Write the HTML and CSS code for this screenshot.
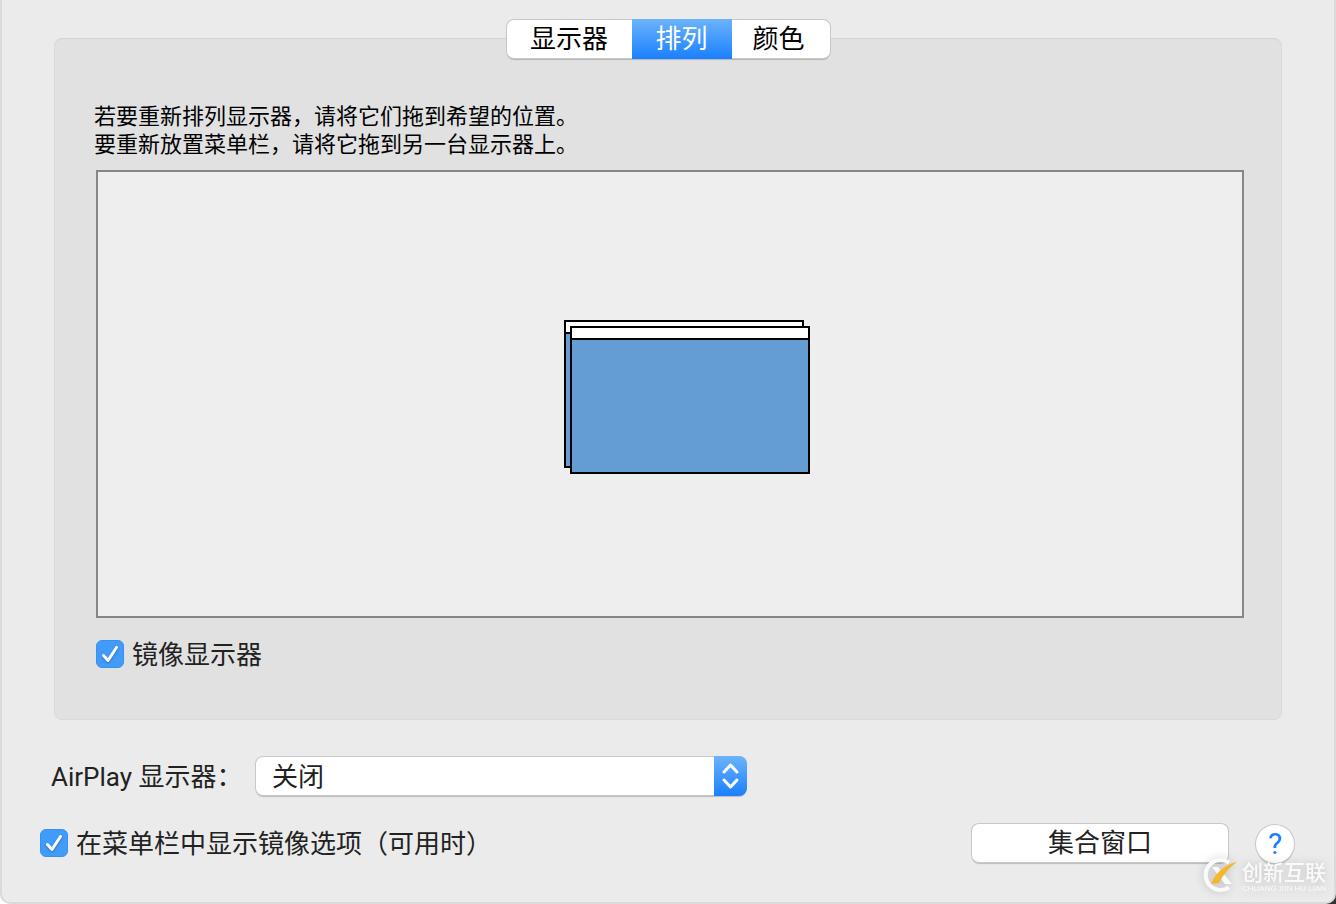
FILE: index.html
```html
<!DOCTYPE html>
<html lang="zh-CN">
<head>
    <meta charset="UTF-8">
    <meta name="viewport" content="width=device-width, initial-scale=1.0">
    <title>显示器</title>
    <link rel="stylesheet" href="styles.css">
</head>
<body>
    <main class="window">
        <section class="panel">
            <div class="tabs" role="tablist">
                <button type="button" class="tab tab-wide" role="tab">显示器</button>
                <button type="button" class="tab active" role="tab" aria-selected="true">排列</button>
                <button type="button" class="tab tab-last" role="tab">颜色</button>
            </div>

            <p class="hint">若要重新排列显示器，请将它们拖到希望的位置。<br>要重新放置菜单栏，请将它拖到另一台显示器上。</p>

            <div class="canvas">
                <div class="display display-back"><div class="menubar"></div></div>
                <div class="display display-front"><div class="menubar"></div></div>
            </div>

            <label class="check panel-check">
                <span class="box">
                    <input type="checkbox" checked>
                    <svg class="tick" viewBox="0 0 28 28"><path d="M7.5 15.5L12 20.5L20.5 7.5"/></svg>
                </span>
                镜像显示器
            </label>
        </section>

        <div class="airplay">
            <label for="airplay">AirPlay 显示器：</label>
            <div class="select">
                <select id="airplay">
                    <option>关闭</option>
                </select>
                <span class="arrows">
                    <svg viewBox="0 0 33 40"><path d="M10 16L16.5 9L23 16M10 24L16.5 31L23 24"/></svg>
                </span>
            </div>
        </div>

        <footer class="footer">
            <label class="check">
                <span class="box">
                    <input type="checkbox" checked>
                    <svg class="tick" viewBox="0 0 28 28"><path d="M7.5 15.5L12 20.5L20.5 7.5"/></svg>
                </span>
                在菜单栏中显示镜像选项（可用时）
            </label>
            <button type="button" class="gather">集合窗口</button>
            <button type="button" class="help">?</button>
        </footer>
    </main>

    <div class="watermark">
        <svg class="logo" viewBox="0 0 38 38">
            <path class="ring" d="M28 6.500A15 15 0 1 0 28 31.500"/>
            <path class="cross" d="M11 11H17L31 28H24Z"/>
            <path class="swoosh" d="M10 28C15 17 22 9 36 6C29 11 23 17 18 27Z"/>
        </svg>
        <div class="brand">
            <span class="brand-name">创新互联</span>
            <span class="brand-sub">CHUANG XIN HU LIAN</span>
        </div>
    </div>
</body>
</html>
```

FILE: styles.css
```css
* {
    box-sizing: border-box;
}
body {
    margin: 0;
    background: linear-gradient(to right, #fff 50%, #333 50%);
    font-family: Roboto, "Noto Sans CJK SC", sans-serif;
    font-size: 26px;
    line-height: 40px;
    color: #222;
}
button, select {
    font: inherit;
    color: inherit;
    margin: 0;
}
.window {
    display: flex;
    flex-direction: column;
    min-height: 100vh;
    padding: 38px;
    background: #ebebeb;
    border: solid #dadada;
    border-width: 0 2px 2px;
    border-radius: 0 0 10px 10px;
}

/* Panel */
.panel {
    flex: 1;
    display: flex;
    flex-direction: column;
    margin: 0 14px;
    padding: 0 37px 44px 39px;
    background: #e1e1e1;
    border: 1px solid #dadada;
    border-top-color: #d2d2d2;
    border-radius: 8px;
}
.tabs {
    display: flex;
    align-self: center;
    margin: -19px 2px 0 0;
    background: #fff;
    border-radius: 7px;
    box-shadow: 0 0 0 1px #c8c8c8, 0 2px 1px rgba(0,0,0,0.2);
}
.tab {
    width: 100px;
    height: 38px;
    padding: 0;
    line-height: 38px;
    background: none;
    border: none;
    color: #000;
}
.tab-wide {
    width: 125px;
}
.tab-last {
    width: 98px;
    padding-right: 4px;
}
.tab.active {
    height: 40px;
    margin: -1px 0;
    color: #fff;
    background: linear-gradient(#6cb3fa, #1a80ff);
}
.hint {
    margin: 45px 0 11px;
    font-size: 22px;
    line-height: 28px;
    color: #000;
}
.canvas {
    position: relative;
    flex: 1;
    min-height: 200px;
    margin-left: 2px;
    background: #eee;
    border: 2px solid #868686;
}
.display {
    position: absolute;
    width: 240px;
    height: 148px;
    background: #649dd4;
    border: 2px solid #000;
}
.display-back {
    left: calc(50% - 106px);
    top: calc(50% - 74px);
}
.display-front {
    left: calc(50% - 100px);
    top: calc(50% - 68px);
}
.menubar {
    height: 12px;
    background: #fff;
    border-bottom: 2px solid #000;
}

/* Checkboxes */
.check {
    display: flex;
    align-items: center;
    gap: 8px;
    padding-top: 2px;
}
.panel-check {
    margin: 15px 0 0 2px;
}
.box {
    position: relative;
    width: 28px;
    height: 28px;
    margin-bottom: 2px;
}
.box input {
    appearance: none;
    display: block;
    width: 28px;
    height: 28px;
    margin: 0;
    background: #419bfa;
    border: 1px solid #3990f0;
    border-radius: 6px;
}
.tick {
    position: absolute;
    inset: 0;
    fill: none;
    stroke: #fff;
    stroke-width: 3;
    stroke-linecap: round;
    stroke-linejoin: round;
    pointer-events: none;
    filter: drop-shadow(0 1px 1px rgba(0,0,0,0.3));
}

/* AirPlay row */
.airplay {
    display: flex;
    align-items: center;
    margin: 36px 0 26px 11px;
}
.airplay label {
    width: 204px;
    padding-top: 2px;
    line-height: 38px;
}
.select {
    position: relative;
    width: 492px;
    padding: 1px;
}
.select select {
    appearance: none;
    display: block;
    width: 100%;
    height: 38px;
    padding: 2px 40px 0 16px;
    line-height: 36px;
    background: #fff;
    border: none;
    border-radius: 7px;
    box-shadow: 0 0 0 1px #c8c8c8, 0 2px 1px rgba(0,0,0,0.2);
}
.arrows {
    position: absolute;
    top: 0;
    right: 0;
    width: 33px;
    height: 40px;
    background: linear-gradient(#6cb3fa, #1a80ff);
    border-radius: 0 8px 8px 0;
    pointer-events: none;
}
.arrows svg {
    display: block;
    fill: none;
    stroke: #fff;
    stroke-width: 3;
    stroke-linecap: round;
    stroke-linejoin: round;
}

/* Bottom row */
.footer {
    display: flex;
    align-items: center;
}
.gather {
    width: 256px;
    height: 38px;
    margin-left: auto;
    padding: 0;
    line-height: 38px;
    background: #fff;
    border: none;
    border-radius: 7px;
    box-shadow: 0 0 0 1px #c8c8c8, 0 2px 1px rgba(0,0,0,0.2);
}
.help {
    width: 38px;
    height: 38px;
    margin: 2px 2px 0 28px;
    padding: 0;
    font-size: 30px;
    line-height: 38px;
    color: #1a80ff;
    background: #fff;
    border: none;
    border-radius: 50%;
    box-shadow: 0 0 0 1px #c8c8c8, 0 2px 1px rgba(0,0,0,0.2);
}

/* Watermark */
.watermark {
    position: absolute;
    right: 10px;
    bottom: 10px;
    display: flex;
    align-items: center;
    gap: 3px;
    color: #fafafa;
    filter: drop-shadow(0 0 5px rgba(0,0,0,0.2));
    pointer-events: none;
}
.logo {
    width: 38px;
    height: 38px;
}
.ring {
    fill: none;
    stroke: #fafafa;
    stroke-width: 4;
}
.cross {
    fill: #fafafa;
}
.swoosh {
    fill: #f6b62c;
}
.brand {
    display: flex;
    flex-direction: column;
    padding-top: 4px;
}
.brand-name {
    font-size: 21px;
    font-weight: 500;
    line-height: 24px;
}
.brand-sub {
    font-family: "Liberation Sans", sans-serif;
    font-size: 8px;
    line-height: 8px;
    white-space: nowrap;
}
```
